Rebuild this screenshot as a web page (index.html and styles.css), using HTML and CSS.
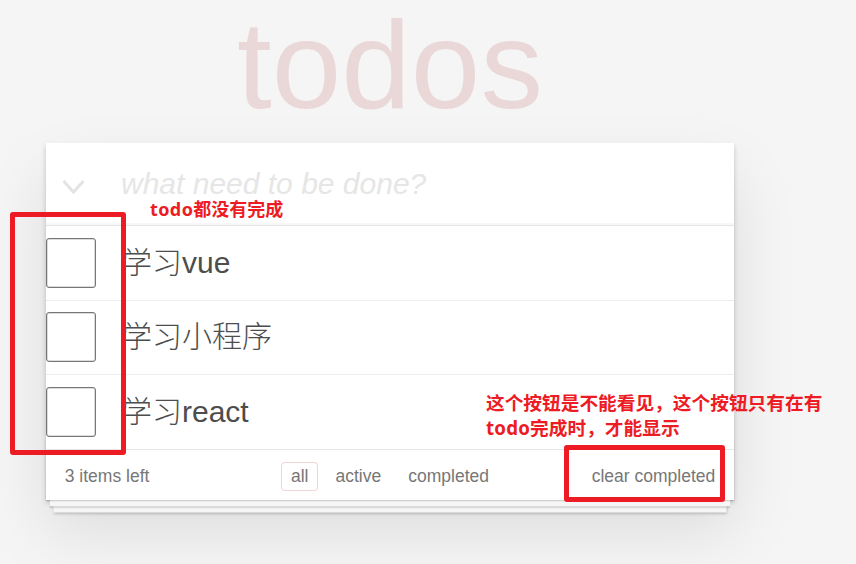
FILE: index.html
```html
<!DOCTYPE html>
<html lang="zh-CN">
<head>
<meta charset="utf-8">
<title>todos</title>
<link rel="stylesheet" href="styles.css">
</head>
<body>
<div class="page">
  <h1 class="title">todos</h1>
  <section class="todoapp">
    <header class="header">
      <svg class="toggle-all" width="24" height="16" viewBox="0 0 24 16" aria-hidden="true">
        <polyline points="1.5,2 11.5,13 21.5,2" fill="none" stroke="#e3e3e3" stroke-width="3"/>
      </svg>
      <input class="new-todo" type="text" placeholder="what need to be done?">
    </header>
    <section class="main">
      <ul class="todo-list">
        <li class="todo"><span class="check"></span><label class="todo-label">学习vue</label></li>
        <li class="todo"><span class="check"></span><label class="todo-label">学习小程序</label></li>
        <li class="todo"><span class="check"></span><label class="todo-label">学习react</label></li>
      </ul>
    </section>
    <footer class="footer">
      <span class="count">3 items left</span>
      <ul class="filters">
        <li><a class="filter selected">all</a></li>
        <li><a class="filter">active</a></li>
        <li><a class="filter">completed</a></li>
      </ul>
      <span class="clear">clear completed</span>
    </footer>
  </section>
</div>

<div class="mark mark-left"></div>
<div class="mark mark-clear"></div>
<div class="note note-top"><span class="latin">todo</span>都没有完成</div>
<div class="note note-clear">这个按钮是不能看见，这个按钮只有在有<br><span class="latin">todo</span>完成时，才能显示</div>
</body>
</html>
```

FILE: styles.css
```css
html, body {
  margin: 0;
  padding: 0;
}

body {
  position: relative;
  background: #f5f5f5;
  font-family: "Liberation Sans", "Noto Sans CJK SC", Arial, sans-serif;
  font-weight: 300;
  color: #4d4d4d;
  min-height: 564px;
  overflow: hidden;
}

.page {
  width: 688px;
  padding: 2px 0 0 46px;
}

.title {
  margin: 0 0 16px;
  font-size: 125px;
  line-height: 125px;
  font-weight: 100;
  text-align: center;
  color: rgba(175, 47, 47, 0.15);
}

.todoapp {
  position: relative;
  background: #fff;
  box-shadow: 0 2.5px 5px rgba(0, 0, 0, 0.2), 0 31px 62px rgba(0, 0, 0, 0.1);
}

.header {
  position: relative;
}

.toggle-all {
  position: absolute;
  left: 16px;
  top: 36px;
}

.new-todo {
  display: block;
  width: 100%;
  height: 82px;
  box-sizing: border-box;
  margin: 0;
  border: none;
  outline: none;
  padding: 20px 20px 20px 75px;
  background: transparent;
  font-family: "Liberation Sans", "Noto Sans CJK SC", Arial, sans-serif;
  font-size: 30px;
  line-height: 42px;
  font-weight: 300;
  color: #4d4d4d;
  box-shadow: inset 0 -2px 1px rgba(0, 0, 0, 0.03);
}

.new-todo::placeholder {
  font-style: italic;
  font-weight: 300;
  color: #e6e6e6;
}

.main {
  border-top: 1px solid #e6e6e6;
}

.todo-list {
  list-style: none;
  margin: 0;
  padding: 0;
}

.todo {
  display: flex;
  align-items: center;
  border-bottom: 1px solid #ededed;
}

.todo:last-child {
  border-bottom: none;
}

.check {
  flex: none;
  width: 50px;
  height: 50px;
  box-sizing: border-box;
  border: 1px solid #767676;
  border-radius: 3px;
  box-shadow: inset 0 0 0 0.5px rgba(118, 118, 118, 0.5);
  background: #fff;
}

.todo-label {
  padding: 18.75px 75px 18.75px 26px;
  font-size: 30px;
  line-height: 36px;
  font-weight: 300;
  color: #4d4d4d;
}

.footer {
  position: relative;
  display: grid;
  grid-template-columns: 1fr auto 1fr;
  align-items: center;
  height: 25px;
  padding: 12px 18.75px 13px;
  border-top: 1px solid #e6e6e6;
  color: #777;
  font-size: 17.5px;
  font-weight: 400;
}

.footer::before {
  content: "";
  position: absolute;
  left: 0;
  right: 0;
  bottom: 0;
  height: 62px;
  overflow: hidden;
  box-shadow: 0 1.25px 1.25px rgba(0, 0, 0, 0.2),
              0 10px 0 -3.75px #f6f6f6,
              0 11.25px 1.25px -3.75px rgba(0, 0, 0, 0.2),
              0 20px 0 -7.5px #f6f6f6,
              0 21.25px 2.5px -7.5px rgba(0, 0, 0, 0.2);
}

.count {
  position: relative;
  justify-self: start;
  line-height: 25px;
}

.filters {
  position: relative;
  display: flex;
  list-style: none;
  margin: 0;
  padding: 0;
}

.filter {
  display: block;
  margin: 0 3.75px;
  padding: 3.5px 8.75px;
  border: 1px solid transparent;
  border-radius: 3.75px;
  color: inherit;
  line-height: 20px;
}

.filter.selected {
  border-color: rgba(175, 47, 47, 0.2);
}

.clear {
  position: relative;
  justify-self: end;
  line-height: 25px;
}

/* red annotation overlays */
.mark {
  position: absolute;
  box-sizing: border-box;
  border: 5px solid #ed1c24;
  border-radius: 3px;
}

.mark-left {
  left: 10px;
  top: 212px;
  width: 116px;
  height: 243px;
}

.mark-clear {
  left: 564px;
  top: 445px;
  width: 161px;
  height: 57px;
}

.note {
  position: absolute;
  color: #ed1c24;
  font-family: "Noto Sans CJK SC", sans-serif;
  font-weight: 700;
  white-space: nowrap;
}

.note .latin {
  font-family: "Noto Sans", "Open Sans", sans-serif;
  font-weight: 700;
}

.note-top {
  left: 150px;
  top: 197px;
  font-size: 18px;
  line-height: 22px;
}

.note-top .latin {
  letter-spacing: 0.4px;
}

.note-clear {
  left: 486px;
  top: 389px;
  font-size: 18.7px;
  line-height: 25px;
}

.note-clear .latin {
  letter-spacing: 0.2px;
}
```
